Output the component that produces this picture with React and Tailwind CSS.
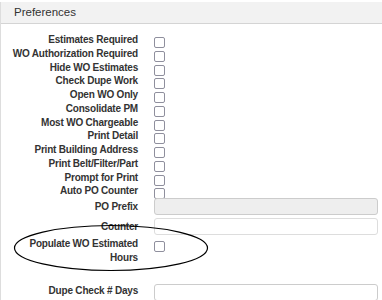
import React from "react";

const checks = [
  "Estimates Required",
  "WO Authorization Required",
  "Hide WO Estimates",
  "Check Dupe Work",
  "Open WO Only",
  "Consolidate PM",
  "Most WO Chargeable",
  "Print Detail",
  "Print Building Address",
  "Print Belt/Filter/Part",
  "Prompt for Print",
  "Auto PO Counter",
];

function Box() {
  return <span className="block w-[11px] h-[11px] rounded-[2px] border border-[#8f8f9d] bg-white" />;
}

const lbl = "text-right font-bold text-[10px] tracking-[-0.2px] whitespace-nowrap";

export default function App() {
  return (
    <div className="relative w-[382px] h-[300px] overflow-hidden bg-white pt-[2px] font-['Liberation_Sans',Arial,sans-serif] text-[#333]">
      <div className="h-full border-l border-[#dddddd]">
        <div className="h-[22px] bg-[#f2f2f2] border-b border-[#d4d4d4] pl-[13px] flex items-center text-[11.5px] leading-none">
          Preferences
        </div>
        <div className="pt-[9px] pr-[4px]">
          {checks.map((c) => (
            <div key={c} className="grid grid-cols-[137px_1fr] gap-x-[16px] h-[13.75px] items-start">
              <div className={`${lbl} leading-[13.75px]`}>{c}</div>
              <div className="pt-[4px]"><Box /></div>
            </div>
          ))}
          <div className="grid grid-cols-[137px_1fr] gap-x-[16px] items-center mt-[0px]">
            <div className={`${lbl} leading-[14px]`}>PO Prefix</div>
            <div className="h-[17px] rounded-[3px] border border-[#cccccc] bg-[#eeeeee]" />
          </div>
          <div className="grid grid-cols-[137px_1fr] gap-x-[16px] items-center mt-[3px]">
            <div className={`${lbl} leading-[14px]`}>Counter</div>
            <div className="h-[17px] rounded-[3px] border border-[#dddddd] bg-white" />
          </div>
          <div className="grid grid-cols-[137px_1fr] gap-x-[16px] items-start mt-[2px]">
            <div className={`${lbl} leading-[14px]`}>
              Populate WO Estimated
              <br />
              Hours
            </div>
            <div className="pt-[4px]"><Box /></div>
          </div>
          <div className="grid grid-cols-[137px_1fr] gap-x-[16px] items-start mt-[19px]">
            <div className={`${lbl} leading-[14px]`}>Dupe Check # Days</div>
            <div className="h-[17px] rounded-[3px] border border-[#cccccc] bg-white" />
          </div>
        </div>
      </div>
      <svg className="absolute left-[13px] top-[224px]" width="196" height="48" viewBox="0 0 196 48">
        <ellipse cx="98" cy="24" rx="96.5" ry="22.5" fill="none" stroke="#000" strokeWidth="1.2" />
      </svg>
    </div>
  );
}
